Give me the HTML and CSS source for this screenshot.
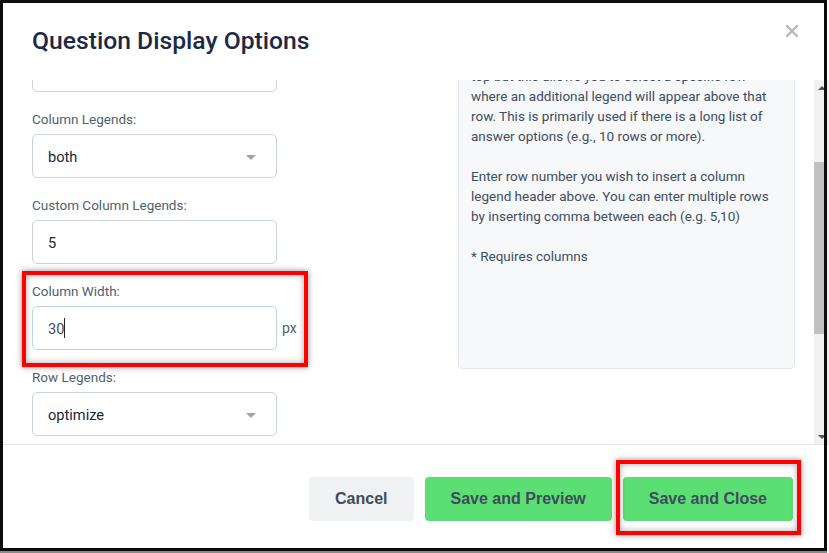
FILE: index.html
```html
<!DOCTYPE html>
<html>
<head>
    <meta charset="UTF-8">
    <title>Question Display Options</title>
    <link rel="stylesheet" href="styles.css">
    <script src="script.js"></script>
</head>
<body>
<div class="modal">
    <div class="modal-header">
        <h2>Question Display Options</h2>
        <span class="close">
            <svg width="12" height="12" viewBox="0 0 12 12"><path d="M1 1L11 11M11 1L1 11" stroke="#b8b8b8" stroke-width="2.4" stroke-linecap="square"/></svg>
        </span>
    </div>
    <div class="modal-body">
        <div class="scroll" id="options">
            <div class="fields">
                <div class="field">
                    <label>Layout:</label>
                    <div class="control select">grid</div>
                </div>
                <div class="field">
                    <label>Column Legend Position:</label>
                    <div class="control">top</div>
                </div>
                <div class="field">
                    <label>Column Legends:</label>
                    <div class="control select">both</div>
                </div>
                <div class="field">
                    <label>Custom Column Legends:</label>
                    <div class="control">5</div>
                </div>
                <div class="field">
                    <label>Column Width:</label>
                    <div class="control-row">
                        <div class="control focus">30<span class="caret"></span></div>
                        <span class="unit">px</span>
                    </div>
                </div>
                <div class="field">
                    <label>Row Legends:</label>
                    <div class="control select">optimize</div>
                </div>
                <div class="field">
                    <label>Row Width:</label>
                    <div class="control-row">
                        <div class="control">200</div>
                        <span class="unit">px</span>
                    </div>
                </div>
                <div class="field">
                    <label>Randomize Rows:</label>
                    <div class="control select">no</div>
                </div>
            </div>
            <div class="help">
                <p>Column Legends controls where the legend row<br>appears in the grid: at the top, at the bottom,<br>or both.</p>
                <p>Custom Column Legends repeat the legend header<br>inside the grid. Normally legends are shown at the<br>top but this allows you to select a specific row<br>where an additional legend will appear above that<br>row. This is primarily used if there is a long list of<br>answer options (e.g., 10 rows or more).</p>
                <p>Enter row number you wish to insert a column<br>legend header above. You can enter multiple rows<br>by inserting comma between each (e.g. 5,10)</p>
                <p>* Requires columns</p>
            </div>
        </div>
        <!-- 滚动条 -->
        <div class="scrollbar">
            <span class="sb-btn sb-up"></span>
            <div class="sb-track"><div class="sb-thumb" id="thumb"></div></div>
            <span class="sb-btn sb-down"></span>
        </div>
    </div>
    <div class="modal-footer">
        <span class="btn btn-cancel">Cancel</span>
        <span class="btn btn-green">Save and Preview</span>
        <span class="btn btn-green">Save and Close</span>
    </div>
</div>
<!-- 外框和红色标注 -->
<div class="frame"></div>
<div class="mark mark-width"></div>
<div class="mark mark-close"></div>
</body>
</html>
```

FILE: script.js
```js
window.onload = function(){
    // 滚动到 Column Width 附近
    var box = document.getElementById('options');
    var thumb = document.getElementById('thumb');
    box.scrollTop = 143;

    // 按内容高度算出滑块的大小和位置
    var track = thumb.parentNode.clientHeight;
    var h = Math.round(track * box.clientHeight / box.scrollHeight);
    var top = Math.round((track - h) * box.scrollTop / (box.scrollHeight - box.clientHeight));
    thumb.style.height = h + 'px';
    thumb.style.marginTop = top + 'px';
}
```

FILE: styles.css
```css
/**重置标签默认样式*/
* {
    margin: 0;
    padding: 0;
    box-sizing: border-box;
    font-family: Roboto, 'Liberation Sans', sans-serif;
}
body {
    width: 829px;
    height: 553px;
    overflow: hidden;
    background: #fff;
}
.modal {
    width: 829px;
    height: 551px;
    background: #fff;
    display: flex;
    flex-direction: column;
}
.modal-header {
    height: 80px;
    display: flex;
    justify-content: space-between;
    align-items: flex-start;
    padding: 26px 31px 0 32px;
}
.modal-header h2 {
    font-size: 24.7px;
    font-weight: 500;
    line-height: 30px;
    color: #1b2a44;
}
.close {
    display: block;
    margin-top: -4px;
    height: 12px;
}
.modal-body {
    height: 365px;
    display: flex;
    border-bottom: 1px solid #e6e6e6;
}
.scroll {
    flex: 1;
    overflow: hidden;
    display: flex;
    justify-content: space-between;
    align-items: flex-start;
    padding: 0 19px 20px 32px;
}
.scrollbar {
    width: 15px;
    background: #f1f1f1;
    display: flex;
    flex-direction: column;
}
.sb-btn {
    display: flex;
    height: 15px;
    justify-content: center;
    align-items: center;
}
.sb-up::before {
    content: '';
    border-left: 4px solid transparent;
    border-right: 4px solid transparent;
    border-bottom: 4px solid #505050;
}
.sb-down::before {
    content: '';
    border-left: 4px solid transparent;
    border-right: 4px solid transparent;
    border-top: 4px solid #505050;
}
.sb-track {
    flex: 1;
}
.sb-thumb {
    background: #c1c1c1;
    margin: 0 2px 0 0;
}
.fields {
    width: 266px;
}
.field {
    margin-bottom: 17px;
}
.field label {
    display: block;
    font-size: 13.5px;
    line-height: 20px;
    color: #4f5f70;
    margin-bottom: 5px;
}
.control {
    position: relative;
    width: 245px;
    height: 44px;
    border: 1px solid #cdd3da;
    border-radius: 5px;
    padding: 0 15px;
    font-size: 14.6px;
    line-height: 44px;
    color: #17253a;
    background: #fff;
}
.control.select::after {
    content: '';
    position: absolute;
    right: 20px;
    top: 20px;
    border-left: 5px solid transparent;
    border-right: 5px solid transparent;
    border-top: 5px solid #a3a3a3;
}
.control.focus {
    border-color: #bcd4e8;
    color: #3c4b5c;
}
.caret {
    display: inline-block;
    width: 1px;
    height: 20px;
    background: #222;
    vertical-align: -4px;
}
.control-row {
    display: flex;
    align-items: center;
    gap: 5px;
}
.unit {
    font-size: 14px;
    color: #4f5f70;
}
.help {
    width: 337px;
    height: 432px;
    flex-shrink: 0;
    background: #f7f8fa;
    border: 1px solid #e2e5e9;
    border-radius: 5px;
    padding: 8px 12px;
    font-size: 13.5px;
    line-height: 20px;
    color: #3e4d61;
}
.help p {
    margin-bottom: 20px;
    white-space: nowrap;
}
.modal-footer {
    flex: 1;
    display: flex;
    justify-content: flex-end;
    align-items: flex-start;
    gap: 11px;
    padding: 32px 36px 0 0;
}
.btn {
    display: inline-block;
    height: 44px;
    line-height: 44px;
    padding: 0 26px;
    border-radius: 4px;
    font-family: 'Liberation Sans', Arial, sans-serif;
    font-size: 16px;
    font-weight: bold;
    color: #3f4b5b;
    cursor: pointer;
}
.btn-cancel {
    background: #f0f1f3;
}
.btn-green {
    background: #5bdf74;
}
.frame {
    position: absolute;
    left: 0;
    top: 0;
    width: 827px;
    height: 551px;
    border: 3px solid #0c0c0c;
    box-shadow: 0 2px 0 #8a8a8a;
    pointer-events: none;
}
.mark {
    position: absolute;
    border: 4px solid #f00;
    box-shadow: 0 0 6px rgba(0, 0, 0, .45), inset 0 0 6px rgba(0, 0, 0, .35);
    pointer-events: none;
}
.mark-width {
    left: 22px;
    top: 271px;
    width: 286px;
    height: 96px;
}
.mark-close {
    left: 616px;
    top: 460px;
    width: 185px;
    height: 75px;
}
```
